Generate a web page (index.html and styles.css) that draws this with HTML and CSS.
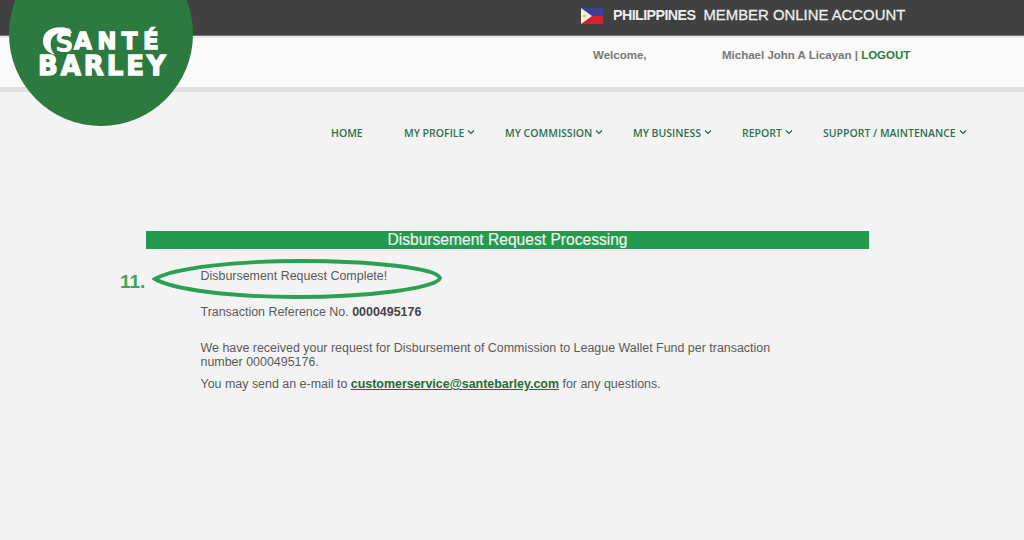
FILE: index.html

```html
<!DOCTYPE html>
<html lang="en">
<head>
    <meta charset="UTF-8">
    <title>Sante Barley - Member Online Account</title>
    <link rel="stylesheet" href="styles.css">
</head>
<body>
    <div class="logo">
        <svg class="logo-ring" width="32" height="32" viewBox="0 0 32 32">
            <path d="M28 3 C 17 -1, 1 2, 1 15 C 1 22, 6 27, 13 29 C 9 25, 8 20, 9 15 C 10 8, 18 5, 30 7 Z" fill="#fff"/>
        </svg>
        <span class="logo-s">S</span>
        <div class="logo-sante">ANTÉ</div>
        <div class="logo-barley">BARLEY</div>
    </div>

    <div class="topbar">
        <svg class="flag" width="22" height="16" viewBox="0 0 22 16">
            <rect width="22" height="8" fill="#3a3f9a"/>
            <rect y="8" width="22" height="8" fill="#d8202c"/>
            <polygon points="0,0 11,8 0,16" fill="#f2efe0"/>
            <circle cx="3.5" cy="8" r="1.5" fill="#e6c84a"/>
        </svg>
        <span class="country">PHILIPPINES</span>
        <span class="account">MEMBER ONLINE ACCOUNT</span>
    </div>

    <div class="userbar">
        <span class="welcome">Welcome,</span>
        <span class="username">Michael John A Licayan | <a href="#">LOGOUT</a></span>
    </div>

    <ul class="nav">
        <li class="nav-home"><a href="#">HOME</a></li>
        <li class="nav-profile"><a href="#">MY PROFILE</a><svg class="caret" width="8" height="6" viewBox="0 0 8 6"><path d="M1 1.5 L4 4.5 L7 1.5" fill="none" stroke="#2c5a3c" stroke-width="1.1"/></svg></li>
        <li class="nav-commission"><a href="#">MY COMMISSION</a><svg class="caret" width="8" height="6" viewBox="0 0 8 6"><path d="M1 1.5 L4 4.5 L7 1.5" fill="none" stroke="#2c5a3c" stroke-width="1.1"/></svg></li>
        <li class="nav-business"><a href="#">MY BUSINESS</a><svg class="caret" width="8" height="6" viewBox="0 0 8 6"><path d="M1 1.5 L4 4.5 L7 1.5" fill="none" stroke="#2c5a3c" stroke-width="1.1"/></svg></li>
        <li class="nav-report"><a href="#">REPORT</a><svg class="caret" width="8" height="6" viewBox="0 0 8 6"><path d="M1 1.5 L4 4.5 L7 1.5" fill="none" stroke="#2c5a3c" stroke-width="1.1"/></svg></li>
        <li class="nav-support"><a href="#">SUPPORT / MAINTENANCE</a><svg class="caret" width="8" height="6" viewBox="0 0 8 6"><path d="M1 1.5 L4 4.5 L7 1.5" fill="none" stroke="#2c5a3c" stroke-width="1.1"/></svg></li>
    </ul>

    <div class="panel">
        <h3 class="panel-title">Disbursement Request Processing</h3>
        <div class="panel-body">
            <p class="complete">Disbursement Request Complete!</p>
            <p class="reference">Transaction Reference No. <b>0000495176</b></p>
            <p class="received">We have received your request for Disbursement of Commission to League Wallet Fund per transaction number 0000495176.</p>
            <p class="contact">You may send an e-mail to <a href="#">customerservice@santebarley.com</a> for any questions.</p>
        </div>
        <span class="step">11.</span>
        <svg class="ellipse" width="292" height="44" viewBox="0 0 296 44" preserveAspectRatio="none">
            <path d="M3 22 C 22 11, 84 4, 150 4 C 224 4, 288 11, 292 21 C 289 31, 222 40, 146 40 C 78 40, 20 32, 3 22 Z" fill="none" stroke="#2aa052" stroke-width="3.8"/>
        </svg>
    </div>
</body>
</html>
```

FILE: styles.css

```css
html, body { margin: 0; padding: 0; }
body { position: relative; height: 540px; overflow: hidden; background: #f3f3f3; font-family: "Liberation Sans", Arial, sans-serif; color: #555; }
a { text-decoration: none; }

.logo { position: absolute; left: 9px; top: -58px; width: 184px; height: 184px; border-radius: 50%; background: #2d7a40; color: #fff; font-family: "DejaVu Sans", sans-serif; font-weight: bold; -webkit-text-stroke: 1.3px #fff; }
.logo-ring { position: absolute; left: 33px; top: 84px; }
.logo-s { position: absolute; left: 46px; top: 86px; font-size: 26px; line-height: 30px; -webkit-text-stroke: 0; }
.logo-sante { position: absolute; left: 65px; top: 86px; font-size: 23px; line-height: 26px; letter-spacing: 5.4px; white-space: nowrap; }
.logo-barley { position: absolute; left: 29px; top: 111px; font-size: 26px; line-height: 26px; letter-spacing: 2.9px; white-space: nowrap; }

.topbar { display: flex; align-items: center; height: 36px; padding: 0 0 6px 581px; box-sizing: border-box; background: #414141; border-bottom: 1px solid #777; color: #eee; font-weight: bold; }
.flag { margin-right: 10px; margin-top: 3px; }
.country { font-size: 14.3px; letter-spacing: -0.6px; margin-right: 8px; }
.account { font-size: 14.9px; font-weight: normal; -webkit-text-stroke: 0.3px #eee; }

.userbar { display: flex; height: 49px; padding-left: 593px; background: #fafafa; border-top: 2px solid #e6e6e6; border-bottom: 5px solid #e0e0e0; font-size: 11.5px; font-weight: bold; color: #777; line-height: 34px; }
.welcome { width: 129px; }
.username a { color: #2f7a3b; }

.nav { display: flex; list-style: none; margin: 0; padding: 34px 0 0 331px; font-family: "Open Sans", sans-serif; font-size: 10.5px; font-weight: 600; line-height: 14px; }
.nav a { color: #2f7050; }
.nav li { display: flex; align-items: center; }
.caret { margin-left: 3px; margin-top: -3px; }
.nav-home { width: 73px; }
.nav-profile { width: 101px; }
.nav-commission { width: 128px; }
.nav-business { width: 109px; }
.nav-report { width: 81px; }

.panel { position: relative; margin: 91px 0 0 146px; width: 723px; }
.panel-title { margin: 0; height: 18px; background: #239a4d; color: #f0f0f0; font-size: 15.6px; font-weight: normal; line-height: 18px; text-align: center; -webkit-text-stroke: 0.2px #f0f0f0; }
.panel-body { padding: 20px 90px 0 54.5px; font-size: 12.45px; line-height: 14px; color: #5a5a5a; }
.panel-body p { margin: 0; }
.reference { margin-top: 22px !important; }
.received { margin-top: 22px !important; }
.contact { margin-top: 8px !important; }
.contact a { color: #1f6b3a; font-weight: bold; text-decoration: underline; }
.reference b { color: #444; }

.step { position: absolute; left: -26px; top: 41px; color: #3aa655; font-size: 19px; font-weight: bold; line-height: 20px; }
.ellipse { position: absolute; left: 6px; top: 26px; }
```
